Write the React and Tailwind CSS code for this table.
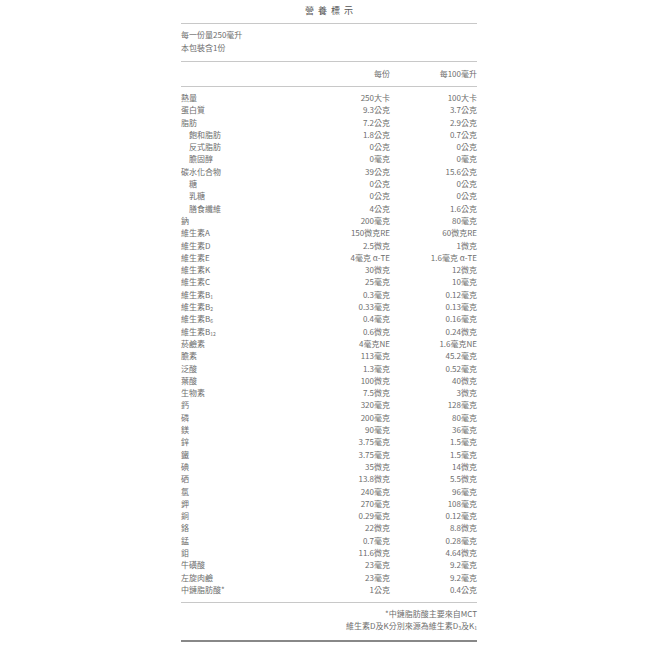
const rows = [
  ["熱量", "250大卡", "100大卡"],
  ["蛋白質", "9.3公克", "3.7公克"],
  ["脂肪", "7.2公克", "2.9公克"],
  ["飽和脂肪", "1.8公克", "0.7公克", true],
  ["反式脂肪", "0公克", "0公克", true],
  ["膽固醇", "0毫克", "0毫克", true],
  ["碳水化合物", "39公克", "15.6公克"],
  ["糖", "0公克", "0公克", true],
  ["乳糖", "0公克", "0公克", true],
  ["膳食纖維", "4公克", "1.6公克", true],
  ["鈉", "200毫克", "80毫克"],
  ["維生素A", "150微克RE", "60微克RE"],
  ["維生素D", "2.5微克", "1微克"],
  ["維生素E", "4毫克 α-TE", "1.6毫克 α-TE"],
  ["維生素K", "30微克", "12微克"],
  ["維生素C", "25毫克", "10毫克"],
  [["維生素B", "1"], "0.3毫克", "0.12毫克"],
  [["維生素B", "2"], "0.33毫克", "0.13毫克"],
  [["維生素B", "6"], "0.4毫克", "0.16毫克"],
  [["維生素B", "12"], "0.6微克", "0.24微克"],
  ["菸鹼素", "4毫克NE", "1.6毫克NE"],
  ["膽素", "113毫克", "45.2毫克"],
  ["泛酸", "1.3毫克", "0.52毫克"],
  ["葉酸", "100微克", "40微克"],
  ["生物素", "7.5微克", "3微克"],
  ["鈣", "320毫克", "128毫克"],
  ["磷", "200毫克", "80毫克"],
  ["鎂", "90毫克", "36毫克"],
  ["鋅", "3.75毫克", "1.5毫克"],
  ["鐵", "3.75毫克", "1.5毫克"],
  ["碘", "35微克", "14微克"],
  ["硒", "13.8微克", "5.5微克"],
  ["氯", "240毫克", "96毫克"],
  ["鉀", "270毫克", "108毫克"],
  ["銅", "0.29毫克", "0.12毫克"],
  ["鉻", "22微克", "8.8微克"],
  ["錳", "0.7毫克", "0.28毫克"],
  ["鉬", "11.6微克", "4.64微克"],
  ["牛磺酸", "23毫克", "9.2毫克"],
  ["左旋肉鹼", "23毫克", "9.2毫克"],
  ["中鏈脂肪酸*", "1公克", "0.4公克"],
];

// 名稱欄，下標用 sub
const Name = ({ name }) =>
  Array.isArray(name) ? (
    <>
      {name[0]}
      <sub className="text-[5px] align-baseline relative top-[1px]">{name[1]}</sub>
    </>
  ) : (
    name
  );

export default function App() {
  return (
    <div
      className="flex justify-center pl-2 bg-white text-[#6e6e6e] text-[8px]"
      style={{ fontFamily: '"Noto Sans CJK TC", "Noto Sans", sans-serif' }}
    >
      <div className="w-[296px] pt-[4px]">
        {/* 標題 */}
        <div className="text-center text-[9px] leading-[14px] tracking-[4px] text-[#555] mb-[5px] pl-[4px]">
          營養標示
        </div>

        <div className="border-t border-[#c8c8c8] pt-[5px] pb-[7px] leading-[12.5px]">
          <div>每一份量250毫升</div>
          <div>本包裝含1份</div>
        </div>

        <div className="border-t border-[#c8c8c8] pt-[6px] pb-[6px] leading-[12px] flex">
          <div className="flex-1" />
          <div className="w-[100px] text-right">每份</div>
          <div className="w-[87px] text-right">每100毫升</div>
        </div>

        <div className="border-t border-[#c8c8c8] pt-[5px] pb-[6px] leading-[12.3px]">
          {rows.map((r, i) => (
            <div key={i} className="flex">
              <div className={"flex-1 " + (r[3] ? "pl-[8px]" : "")}>
                <Name name={r[0]} />
              </div>
              <div className="w-[100px] text-right">{r[1]}</div>
              <div className="w-[87px] text-right">{r[2]}</div>
            </div>
          ))}
        </div>

        <div className="border-t border-[#c8c8c8] pt-[5px] pb-[8px] leading-[12px] text-right">
          <div>*中鏈脂肪酸主要來自MCT</div>
          <div>
            維生素D及K分別來源為維生素D
            <sub className="text-[5px] align-baseline relative top-[1px]">3</sub>
            及K
            <sub className="text-[5px] align-baseline relative top-[1px]">1</sub>
          </div>
        </div>

        <div className="border-t-2 border-[#888]" />
      </div>
    </div>
  );
}
